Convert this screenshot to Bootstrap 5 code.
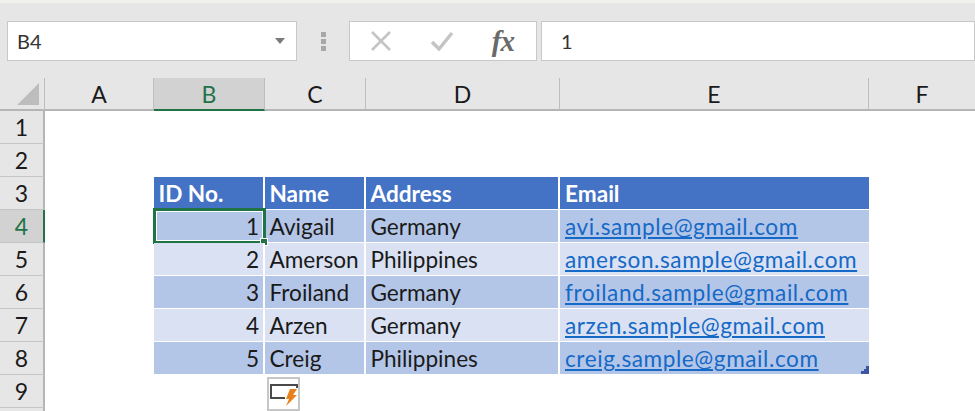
<!DOCTYPE html>
<html lang="en">
<head>
  <meta charset="UTF-8" />
  <meta name="viewport" content="width=device-width, initial-scale=1" />
  <title>Sheet</title>
  <link href="https://cdn.jsdelivr.net/npm/bootstrap@5.3.0/dist/css/bootstrap.min.css" rel="stylesheet" />
  <style>
    html, body { height: 411px; overflow: hidden; }
    body { background: #fff; font-family: Lato, "Liberation Sans", sans-serif; color: #1a1a1a; }

    /* formula bar */
    .fbar { height: 78px; background: #e6e6e6; border-top: 3px solid #f3f1ee; padding: 18px 0 0 7px; }
    .fbox { height: 40px; background: #fff; border: 1px solid #c8c8c8; }
    .namebox { width: 290px; padding: 0 11px 0 9px; font-size: 20px; color: #333; }
    .grip { width: 52px; height: 40px; }
    .grip span { width: 5px; height: 5px; background: #a8a8a8; display: block; margin: 1px 0; }
    .btnbox { width: 188px; padding: 0 22px 0 20px; }
    .fx-label { font-family: "Liberation Serif", serif; font-style: italic; font-weight: 700; font-size: 29px; line-height: 1; color: #6a6a6a; letter-spacing: -1px; }
    .inputbox { margin-left: 4px; padding-left: 19px; font-size: 20px; color: #333; }

    /* sheet */
    .sheet { border-collapse: separate; border-spacing: 0; table-layout: fixed; width: 975px; }
    .sheet th, .sheet td { padding: 0; white-space: nowrap; font-weight: 400; line-height: 1; }
    .colhead th { height: 33px; background: #e6e6e6; border-right: 1px solid #bdbdbd; border-bottom: 2px solid #b5b5b5; text-align: center; font-size: 23px; padding-top: 2px; }
    .colhead th.last-col { border-right: 0; }
    .colhead th.sel-col { background: #d2d2d2; color: #217346; border-bottom-color: #217346; }
    .rowhead { height: 33px; background: #e6e6e6; border-right: 2px solid #b5b5b5; border-bottom: 1px solid #c4c4c4; text-align: center; font-size: 23px; }
    .rowhead.sel-row { background: #d2d2d2; color: #217346; border-right-color: #217346; }
    .rowhead.clip-row { height: 3px; border-bottom: 0; }
    .sheet td.hd, .sheet td.odd, .sheet td.even { border-right: 2px solid #fff; border-bottom: 1px solid #fff; padding: 3px 5px 0 4.5px; font-size: 22.6px; }
    .sheet td.hd { background: #4472c4; color: #fff; font-weight: 700; }
    .sheet td.odd { background: #b4c6e7; }
    .sheet td.even { background: #d9e1f2; }
    .sheet td.num { text-align: right; padding-right: 4px; }
    .sheet td.end-col { border-right: 0; padding-left: 5px; }
    .sheet a { color: #1569c7; letter-spacing: .57px; }

    /* overlays */
    .anchor { position: relative; }
    .cursor { position: absolute; left: -1px; top: -2px; right: -3px; bottom: -2px; border: 3px solid #217346; box-shadow: inset 0 0 0 1px #fff; }
    .handle { position: absolute; right: -5px; bottom: -4px; width: 8px; height: 8px; background: #217346; border: 1px solid #fff; }
    .resize { position: absolute; right: 0; bottom: 0; }
    .quick { position: absolute; left: 2px; top: 2px; width: 33px; height: 34px; background: #fff; border: 2px solid #c6c6c6; }
  </style>
</head>
<body>
  <div class="fbar d-flex align-items-start">
    <div class="fbox namebox d-flex align-items-center justify-content-between">
      <span>B4</span>
      <svg width="10" height="6" viewBox="0 0 10 6"><path d="M0 0h10L5 6z" fill="#7a7a7a"/></svg>
    </div>
    <div class="grip d-flex flex-column align-items-center justify-content-center">
      <span></span><span></span><span></span>
    </div>
    <div class="fbox btnbox d-flex align-items-center justify-content-between">
      <svg width="22" height="20" viewBox="0 0 22 20"><path d="M2 1l18 18M20 1L2 19" stroke="#c4c4c4" stroke-width="2.6" fill="none"/></svg>
      <svg width="24" height="20" viewBox="0 0 24 20"><path d="M2 11l7 7L22 2" stroke="#c4c4c4" stroke-width="3.4" fill="none"/></svg>
      <span class="fx-label">fx</span>
    </div>
    <div class="fbox inputbox flex-grow-1 d-flex align-items-center"><span>1</span></div>
  </div>

  <table class="sheet">
    <colgroup>
      <col style="width:45px"><col style="width:109px"><col style="width:111px"><col style="width:101px"><col style="width:194px"><col style="width:309px"><col style="width:106px">
    </colgroup>
    <thead>
      <tr class="colhead">
        <th>
          <svg class="d-block ms-auto me-1" width="23" height="23" viewBox="0 0 23 23"><path d="M22 0v22H0z" fill="#bdbdbd"/></svg>
        </th>
        <th>A</th><th class="sel-col">B</th><th>C</th><th>D</th><th>E</th><th class="last-col">F</th>
      </tr>
    </thead>
    <tbody id="rows"></tbody>
  </table>

  <script>
    const people = [
      ["Avigail", "Germany", "avi.sample@gmail.com"],
      ["Amerson", "Philippines", "amerson.sample@gmail.com"],
      ["Froiland", "Germany", "froiland.sample@gmail.com"],
      ["Arzen", "Germany", "arzen.sample@gmail.com"],
      ["Creig", "Philippines", "creig.sample@gmail.com"]
    ];
    const cornerSvg = '<svg class="resize" width="8" height="8" viewBox="0 0 8 8"><path d="M8 0v8H0V5h3V3h2V0z" fill="#3b55a5"/></svg>';
    let html = "";
    for (let r = 1; r <= 9; r++) {
      html += `<tr><th class="rowhead ${r === 4 ? "sel-row" : ""}">${r}</th>`;
      if (r === 3) {
        html += '<td></td><td class="hd">ID No.</td><td class="hd">Name</td><td class="hd">Address</td><td class="hd end-col">Email</td><td></td>';
      } else if (r >= 4 && r <= 8) {
        const p = people[r - 4];
        const band = r % 2 === 0 ? "odd" : "even";
        const cursor = r === 4 ? '<div class="cursor"></div><div class="handle"></div>' : "";
        const corner = r === 8 ? cornerSvg : "";
        html += `<td></td>
          <td class="${band} num anchor">${r - 3}${cursor}</td>
          <td class="${band}">${p[0]}</td>
          <td class="${band}">${p[1]}</td>
          <td class="${band} end-col anchor"><a href="#">${p[2]}</a>${corner}</td>
          <td></td>`;
      } else if (r === 9) {
        html += `<td></td><td></td><td class="anchor"><div class="quick d-flex align-items-center justify-content-center">
          <svg width="29" height="24" viewBox="0 0 29 24"><path d="M16 16H2V3h26v3" stroke="#4a4a4a" stroke-width="2" fill="none"/><path d="M21 7h7l-4 6h4L17 24l3-7h-3z" fill="#e8811a"/></svg>
        </div></td><td></td><td></td><td></td>`;
      } else {
        html += "<td></td><td></td><td></td><td></td><td></td><td></td>";
      }
      html += "</tr>";
    }
    // bottom sliver of the row below 9
    html += '<tr><th class="rowhead clip-row"></th><td colspan="6"></td></tr>';
    document.getElementById("rows").innerHTML = html;
  </script>
  <script src="https://cdn.jsdelivr.net/npm/bootstrap@5.3.0/dist/js/bootstrap.bundle.min.js"></script>
</body>
</html>
